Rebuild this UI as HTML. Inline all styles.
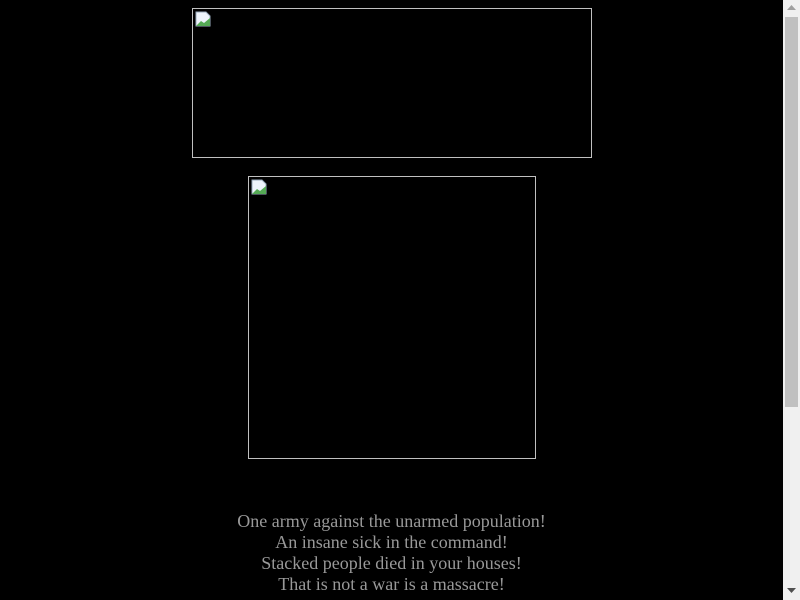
<!DOCTYPE html>
<html><head><style>
html,body{margin:0;padding:0;background:#000;width:800px;height:600px;overflow:hidden}
.b{position:absolute;border:1px solid #c0c0c0;box-sizing:border-box}
.ic{position:absolute;left:2px;top:2px;width:16px;height:16px}
.t{position:absolute;left:0;width:783px;top:511px;text-align:center;font-family:"Liberation Serif",serif;font-size:18px;line-height:21px;color:#999}
.sb{position:absolute;left:783px;top:0;width:17px;height:600px;background:#f0f0f0}
.th{position:absolute;left:785px;top:17px;width:13px;height:390px;background:#c0c0c0}
</style></head><body>
<div class="b" style="left:192px;top:8px;width:400px;height:150px">
<svg class="ic" viewBox="0 0 16 16"><path d="M1 1h10l4 4v10H1z" fill="#eef4fb" stroke="#9ab"/><path d="M1 15l5-5 3 2 6-5v8z" fill="#5a5"/></svg></div>
<div class="b" style="left:248px;top:176px;width:288px;height:283px">
<svg class="ic" viewBox="0 0 16 16"><path d="M1 1h10l4 4v10H1z" fill="#eef4fb" stroke="#9ab"/><path d="M1 15l5-5 3 2 6-5v8z" fill="#5a5"/></svg></div>
<div class="t">One army against the unarmed population!<br>An insane sick in the command!<br>Stacked people died in your houses!<br>That is not a war is a massacre!</div>
<div class="sb"></div><div class="th"></div>
<svg style="position:absolute;left:785px;top:5px" width="13" height="6"><path d="M6.5 0L11 5H2z" fill="#a0a0a0"/></svg>
<svg style="position:absolute;left:785px;top:588px" width="13" height="6"><path d="M2 0h9L6.5 5z" fill="#505050"/></svg>
</body></html>
